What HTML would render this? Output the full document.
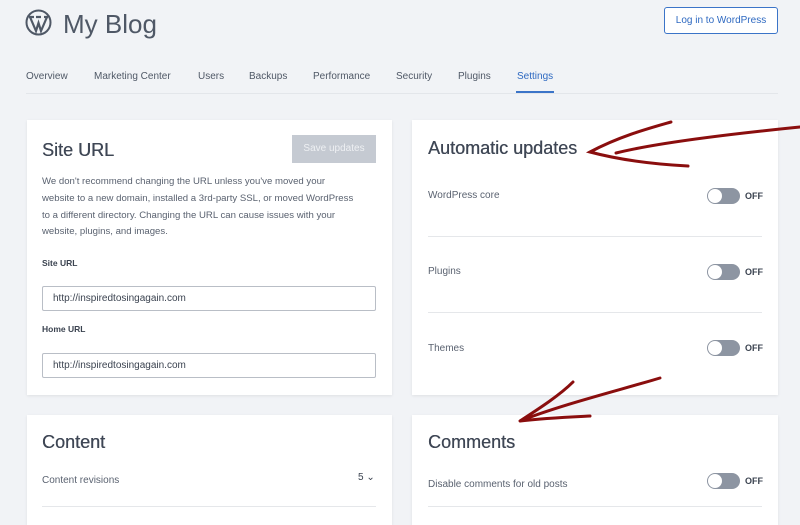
<!DOCTYPE html>
<html><head><style>
body{margin:0;width:800px;height:515px;overflow:hidden;background:#f1f3f6;font-family:"Liberation Sans",sans-serif;color:#4f5866;position:relative}
.abs{position:absolute}
.card{position:absolute;background:#fff;box-shadow:0 1px 3px rgba(0,0,0,.08)}
h2{position:absolute;margin:0;font-weight:normal;font-size:18px;color:#3f4755;text-shadow:0.3px 0 0 #3f4755}
.lbl{position:absolute;font-size:10px;color:#5a6270}
.sw{position:absolute;width:33px;height:16px;border-radius:8px;background:#8d95a2}
.sw:after{content:"";position:absolute;left:1px;top:1px;width:14px;height:14px;border-radius:50%;background:#fff}
.off{position:absolute;font-size:9px;font-weight:bold;color:#3b4350}
.hr{position:absolute;height:1px;background:#e5e7ea}
.inp{position:absolute;border:1px solid #b9bec6;border-radius:2px;background:#fff;font-size:10px;color:#3b4350;padding-left:10px;box-sizing:border-box;line-height:23px}
</style></head><body>
<svg class="abs" style="left:25px;top:9px" width="27" height="27" viewBox="0 0 27 27"><circle cx="13.5" cy="13.5" r="12" fill="none" stroke="#4f5866" stroke-width="2"/><path d="M5 8 L11 22 L13.5 14 L16 22 L22 8 M4 8h5 M11 8h5 M19 8h4" fill="none" stroke="#4f5866" stroke-width="2.2"/></svg>
<div class="abs" style="left:63px;top:9px;font-size:26px;color:#4f5866">My Blog</div>
<div class="abs" style="left:664px;top:7px;width:112px;height:25px;border:1px solid #3b74c8;border-radius:3px;background:#fff;color:#2e69c1;font-size:10px;text-align:center;line-height:25px">Log in to WordPress</div>
<div class="abs" style="top:71px;left:26px;font-size:10px;color:#4f5866">
<span class="abs" style="left:0">Overview</span><span class="abs" style="left:68px;white-space:nowrap">Marketing Center</span><span class="abs" style="left:172px">Users</span><span class="abs" style="left:223px">Backups</span><span class="abs" style="left:287px">Performance</span><span class="abs" style="left:370px">Security</span><span class="abs" style="left:432px">Plugins</span><span class="abs" style="left:491px;color:#2e69c1">Settings</span></div>
<div class="hr" style="left:26px;top:93px;width:752px;background:#e3e6ea"></div>
<div class="abs" style="left:516px;top:91px;width:38px;height:2px;background:#3b74c8"></div>

<div class="card" style="left:27px;top:120px;width:365px;height:275px"></div>
<h2 style="left:42px;top:140px">Site URL</h2>
<div class="abs" style="left:292px;top:135px;width:84px;height:28px;background:#c5cad2;color:#eef0f3;font-size:10px;text-align:center;line-height:28px">Save updates</div>
<div class="abs" style="left:42px;top:174px;width:314px;font-size:9.6px;line-height:16.8px;color:#5a6270">We don't recommend changing the URL unless you've moved your website to a new domain, installed a 3rd-party SSL, or moved WordPress to a different directory. Changing the URL can cause issues with your website, plugins, and images.</div>
<div class="lbl" style="left:42px;top:258px;font-weight:bold;font-size:8.5px;color:#3b4350">Site URL</div>
<div class="inp" style="left:42px;top:286px;width:334px;height:25px">http://inspiredtosingagain.com</div>
<div class="lbl" style="left:42px;top:324px;font-weight:bold;font-size:8.5px;color:#3b4350">Home URL</div>
<div class="inp" style="left:42px;top:353px;width:334px;height:25px">http://inspiredtosingagain.com</div>

<div class="card" style="left:412px;top:120px;width:366px;height:275px"></div>
<h2 style="left:428px;top:138px">Automatic updates</h2>
<div class="lbl" style="left:428px;top:190px">WordPress core</div><div class="sw" style="left:707px;top:188px"></div><div class="off" style="left:745px;top:191px">OFF</div>
<div class="hr" style="left:428px;top:236px;width:334px"></div>
<div class="lbl" style="left:428px;top:266px">Plugins</div><div class="sw" style="left:707px;top:264px"></div><div class="off" style="left:745px;top:267px">OFF</div>
<div class="hr" style="left:428px;top:312px;width:334px"></div>
<div class="lbl" style="left:428px;top:343px">Themes</div><div class="sw" style="left:707px;top:340px"></div><div class="off" style="left:745px;top:343px">OFF</div>

<div class="card" style="left:27px;top:415px;width:365px;height:110px"></div>
<h2 style="left:42px;top:432px">Content</h2>
<div class="lbl" style="left:42px;top:475px">Content revisions</div>
<div class="abs" style="left:358px;top:472px;font-size:10px;color:#3b4350">5 ⌄</div>
<div class="hr" style="left:42px;top:506px;width:334px"></div>
<div class="card" style="left:412px;top:415px;width:366px;height:110px"></div>
<h2 style="left:428px;top:432px">Comments</h2>
<div class="lbl" style="left:428px;top:479px">Disable comments for old posts</div><div class="sw" style="left:707px;top:473px"></div><div class="off" style="left:745px;top:476px">OFF</div>
<div class="hr" style="left:428px;top:506px;width:334px"></div>

<svg class="abs" style="left:0;top:0" width="800" height="515" fill="none" stroke="#8a0e0e" stroke-width="3" stroke-linecap="round">
<path d="M800 127 C740 133 660 142 616 153"/>
<path d="M671 122 C650 128 620 136 590 152 C620 160 650 164 688 166"/>
<path d="M660 378 C620 390 560 405 520 421"/>
<path d="M573 382 C560 395 540 408 520 421 C545 418 570 417 590 416"/>
</svg>
</body></html>
